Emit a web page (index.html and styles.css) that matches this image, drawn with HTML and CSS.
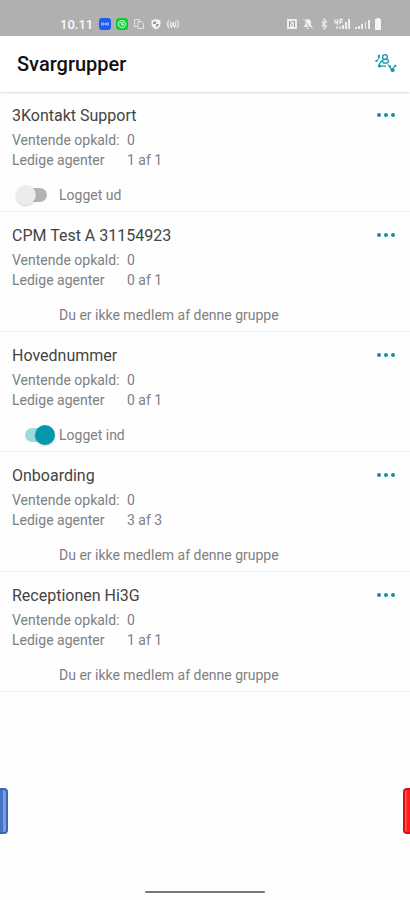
FILE: index.html
```html
<!DOCTYPE html>
<html lang="da">
<head>
<meta charset="utf-8">
<meta name="viewport" content="width=device-width, initial-scale=1">
<title>Svargrupper</title>
<link rel="stylesheet" href="styles.css">
</head>
<body>
<div class="statusbar">
  <div class="status-group">
    <span class="clock">10.11</span>
    <svg class="app-icon" viewBox="0 0 12 12"><rect width="12" height="12" rx="3" fill="#1c5cf0"/><g fill="none" stroke="#b9d0ff" stroke-width="1"><circle cx="3.6" cy="6" r="1.2"/><circle cx="8.4" cy="6" r="1.2"/><path d="M4.8 6h2.4"/></g></svg>
    <svg class="app-icon" viewBox="0 0 12 12"><rect width="12" height="12" rx="3" fill="#14c83c"/><g fill="none" stroke="#c8ffd2" stroke-width="1"><circle cx="6" cy="6" r="3.6"/><path d="M4 4.800h4M6 5v3M6 6.500h2"/></g></svg>
    <svg class="app-icon" viewBox="0 0 12 12"><g fill="none" stroke="#e4e4e4" stroke-width="1"><path d="M4 8.500H1.500v-7h5V3"/><path d="M5 3.500h3.500l2 2v5H5z"/></g></svg>
    <svg class="app-icon" viewBox="0 0 12 12"><path d="M6 1l4.500 1.500v3.500c0 2.500-2 4.300-4.500 5.300C3.500 10.300 1.500 8.500 1.500 6V2.500z" fill="#f4f4f4"/><path d="M6 3v3h3C8.800 7.500 7.600 8.600 6 9.300V6H3V4z" fill="#a0a0a0"/></svg>
    <svg class="app-icon" viewBox="0 0 12 12"><g fill="none" stroke="#ececec" stroke-width="1.200"><path d="M2 2C.2 4.500.2 7.500 2 10M10 2c1.800 2.500 1.800 5.500 0 8M4 3.500c-1 1.500-1 3.500 0 5M8 3.500c1 1.500 1 3.500 0 5M4 10l2-4 2 4"/></g><circle cx="6" cy="5.500" r="1.200" fill="#eee"/></svg>
  </div>
  <div class="status-group status-right">
    <svg class="sys-icon" viewBox="0 0 12 12"><rect x="1" y="1" width="10" height="10" rx="1" fill="#eee"/><path d="M3.500 9V3.500l3 4.500M5.500 3.500h3V9" fill="none" stroke="#999"/></svg>
    <svg class="sys-icon" viewBox="0 0 12 12"><path d="M6 1c2 0 3 1.500 3 3.500V7l1.500 2h-9L3 7V4.500C3 2.500 4 1 6 1zM5 10h2v1H5z" fill="#eee"/><path d="M1 2l9 9" stroke="#b0b0b0"/><path d="M1.500 1l9.500 9.500" stroke="#eee"/></svg>
    <svg class="sys-icon" viewBox="0 0 12 12"><path d="M3.500 3.500l5 5L6 11V1l2.500 2.500-5 5" fill="none" stroke="#e8e8e8" stroke-width="1.200"/></svg>
    <svg class="signal" viewBox="0 0 17 12"><path d="M1 1.500v3h3M3.500 1v6M6 6V1.500h3M6 4h2.500M3 11V8M6 11V8" fill="none" stroke="#eee" stroke-width="1.300"/><path d="M8 7h2v4H8zM11 4h2v7h-2zM14 1h2v10h-2z" fill="#eee"/></svg>
    <svg class="signal" viewBox="0 0 17 12"><path d="M1 9h2v2H1zM4 8h2v3H4zM7 6h2v5H7zM11 4h1v7h-1zM14 2h2v9h-2z" fill="#eee"/></svg>
    <svg class="battery" viewBox="0 0 8 12"><path d="M2.500 0h3v1H7v11H1V1h1.500z" fill="#f6f6f6"/></svg>
  </div>
</div>
<header class="appbar">
  <h1>Svargrupper</h1>
  <button class="icon-button" type="button" aria-label="Skift gruppe">
    <svg viewBox="0 0 24 24" fill="none" stroke="#1795a8" stroke-width="1.300"><circle cx="11" cy="5" r="2.400"/><path d="M8.500 8.500C6.500 9.500 5.300 11.500 5 14.200H12"/><ellipse cx="11.500" cy="9.300" rx="3" ry="1.900"/><path d="M4.800 4.500v2.500M2.500 9l1.500-1.500M14 12.500l3.500 5M18 18l3.500-5M20.500 19l-2-1.500"/><g fill="#1795a8" stroke="none"><circle cx="5" cy="4" r="1.200"/><circle cx="2.300" cy="9" r="1.100"/><circle cx="5.500" cy="14" r="1.600"/><circle cx="18.500" cy="18" r="2"/><circle cx="16" cy="14.500" r="1.100"/><circle cx="21.500" cy="14" r="1.100"/></g></svg>
  </button>
</header>
<main>
  <ul class="groups">
    <li class="group">
      <div class="group-head"><h2>3Kontakt Support</h2><button class="more" type="button" aria-label="Mere"><i></i><i></i><i></i></button></div>
      <dl><dt>Ventende opkald:</dt><dd>0</dd><dt>Ledige agenter</dt><dd>1 af 1</dd></dl>
      <label class="state"><span class="slot"><input class="switch" type="checkbox"></span>Logget ud</label>
    </li>
    <li class="group">
      <div class="group-head"><h2>CPM Test A 31154923</h2><button class="more" type="button" aria-label="Mere"><i></i><i></i><i></i></button></div>
      <dl><dt>Ventende opkald:</dt><dd>0</dd><dt>Ledige agenter</dt><dd>0 af 1</dd></dl>
      <p class="state"><span class="slot"></span>Du er ikke medlem af denne gruppe</p>
    </li>
    <li class="group">
      <div class="group-head"><h2>Hovednummer</h2><button class="more" type="button" aria-label="Mere"><i></i><i></i><i></i></button></div>
      <dl><dt>Ventende opkald:</dt><dd>0</dd><dt>Ledige agenter</dt><dd>0 af 1</dd></dl>
      <label class="state"><span class="slot"><input class="switch" type="checkbox" checked></span>Logget ind</label>
    </li>
    <li class="group">
      <div class="group-head"><h2>Onboarding</h2><button class="more" type="button" aria-label="Mere"><i></i><i></i><i></i></button></div>
      <dl><dt>Ventende opkald:</dt><dd>0</dd><dt>Ledige agenter</dt><dd>3 af 3</dd></dl>
      <p class="state"><span class="slot"></span>Du er ikke medlem af denne gruppe</p>
    </li>
    <li class="group">
      <div class="group-head"><h2>Receptionen Hi3G</h2><button class="more" type="button" aria-label="Mere"><i></i><i></i><i></i></button></div>
      <dl><dt>Ventende opkald:</dt><dd>0</dd><dt>Ledige agenter</dt><dd>1 af 1</dd></dl>
      <p class="state"><span class="slot"></span>Du er ikke medlem af denne gruppe</p>
    </li>
  </ul>
</main>
<div class="edge edge-left"></div>
<div class="edge edge-right"></div>
<div class="home-bar"></div>
</body>
</html>
```
FILE: styles.css
```css
* { box-sizing: border-box; }
body {
  margin: 0;
  min-height: 100vh;
  position: relative;
  display: flex;
  flex-direction: column;
  background: #fefefe;
  color: #333;
  font-family: Roboto, sans-serif;
  font-size: 14px;
}
h1, h2, p, dl, dd, ul { margin: 0; padding: 0; }
button { border: 0; padding: 0; background: none; }
svg { display: block; }

.statusbar {
  height: 36px;
  padding: 12px 28px 0 60px;
  display: flex;
  justify-content: space-between;
  align-items: flex-start;
  background: #b0b0b0;
}
.status-group { display: flex; align-items: center; height: 24px; gap: 5px; }
.clock { color: #fafafa; font-size: 13px; font-weight: 500; margin-right: 1px; }
.app-icon { width: 12px; height: 12px; }
.status-right { gap: 3px; }
.sys-icon { width: 12px; height: 12px; margin-right: 1px; }
.signal { width: 17px; height: 12px; }
.battery { width: 8px; height: 12px; }

.appbar {
  height: 56px;
  padding: 0 12px 0 17px;
  display: flex;
  align-items: center;
  justify-content: space-between;
  background: #fff;
  box-shadow: 0 1px 2px rgba(0, 0, 0, .14);
}
h1 { font-size: 20px; font-weight: 500; color: #111; }
.icon-button, .icon-button svg { width: 24px; height: 24px; }

.groups { list-style: none; }
.group {
  padding: 12px 12px 4px;
  border-bottom: 1px solid #f2f2f2;
}
.group-head { display: flex; justify-content: space-between; align-items: center; height: 22px; margin-bottom: 4px; }
h2 { font-size: 16px; font-weight: 400; color: #444; }
.more { display: flex; gap: 3px; padding: 8px 3px; }
.more i { width: 4px; height: 4px; border-radius: 50%; background: #158fa3; }
dl { display: grid; grid-template-columns: 115px 1fr; line-height: 20px; color: #808080; }
.state { display: flex; align-items: center; height: 24px; margin-top: 13px; color: #808080; }
.slot { width: 47px; display: flex; }

.switch {
  appearance: none;
  position: relative;
  width: 22px;
  height: 14px;
  margin: 0 0 0 13px;
  border-radius: 7px;
  background: #b4b4b4;
}
.switch::before {
  content: "";
  position: absolute;
  top: -3px;
  left: -9px;
  width: 20px;
  height: 20px;
  border-radius: 50%;
  background: #ececec;
  box-shadow: 0 1px 2px rgba(0, 0, 0, .2);
}
.switch:checked { background: #9bdbe0; }
.switch:checked::before { left: 10px; background: #0797ad; }

.edge { position: absolute; bottom: 66px; height: 46px; }
.edge-left {
  left: 0;
  width: 8px;
  border: 2px solid #3c66b4;
  border-left: 0;
  border-radius: 0 4px 4px 0;
  background: linear-gradient(90deg, #4472c4 50%, #7c9cda 50%);
}
.edge-right {
  right: 0;
  width: 7px;
  border: 2px solid #e00c0c;
  border-right: 0;
  border-radius: 4px 0 0 4px;
  background: linear-gradient(90deg, #ff6464 20%, #ff1c1c 40%);
}
.home-bar { width: 120px; height: 2px; margin: auto auto 7px; border-radius: 1px; background: #777; }
```
